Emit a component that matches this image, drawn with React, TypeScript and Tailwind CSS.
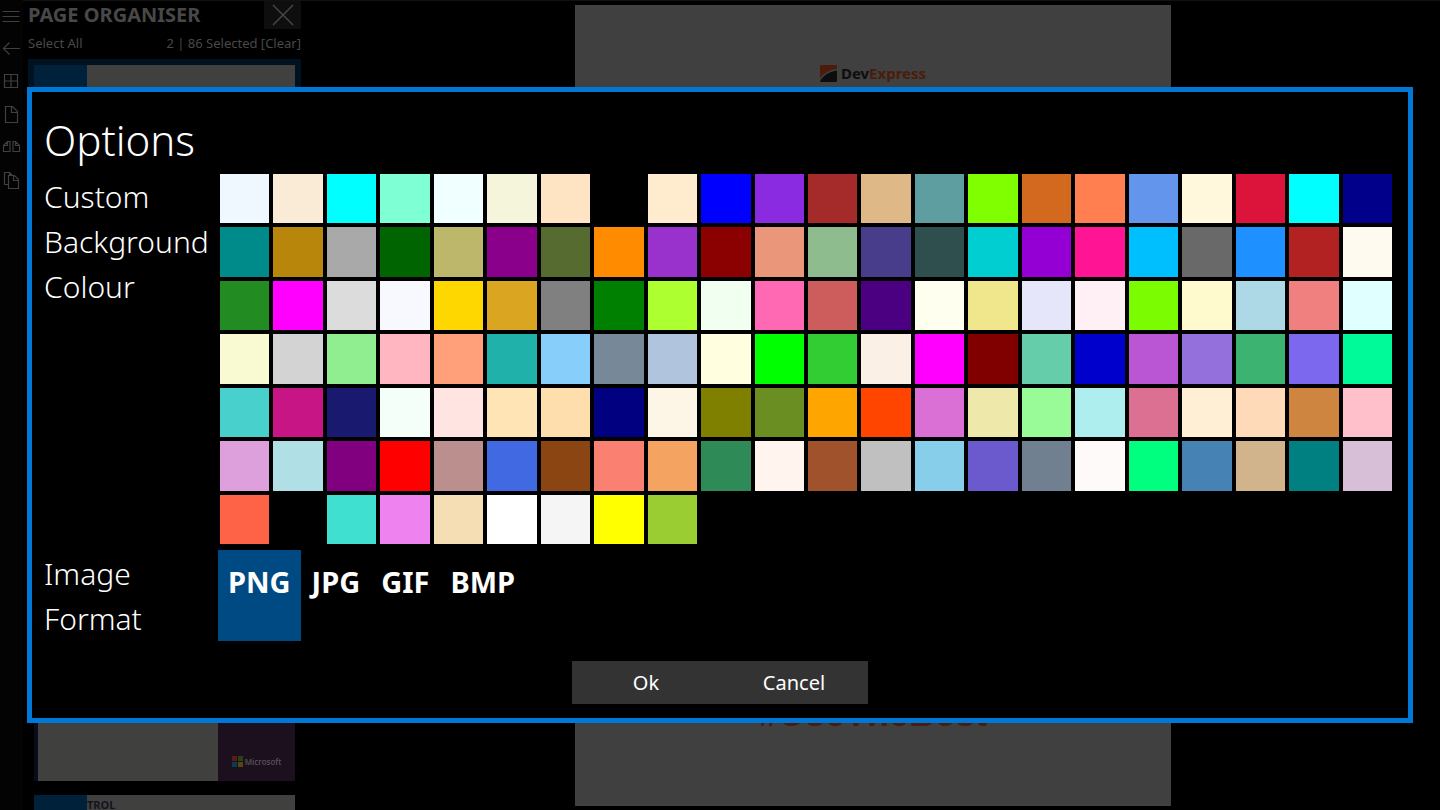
import { useState } from "react";
import type { ReactNode } from "react";

const colours = [
  "AliceBlue", "AntiqueWhite", "Aqua", "Aquamarine", "Azure", "Beige", "Bisque", "Black", "BlanchedAlmond", "Blue", "BlueViolet",
  "Brown", "BurlyWood", "CadetBlue", "Chartreuse", "Chocolate", "Coral", "CornflowerBlue", "Cornsilk", "Crimson", "Cyan", "DarkBlue",
  "DarkCyan", "DarkGoldenrod", "DarkGray", "DarkGreen", "DarkKhaki", "DarkMagenta", "DarkOliveGreen", "DarkOrange", "DarkOrchid",
  "DarkRed", "DarkSalmon", "DarkSeaGreen", "DarkSlateBlue", "DarkSlateGray", "DarkTurquoise", "DarkViolet", "DeepPink",
  "DeepSkyBlue", "DimGray", "DodgerBlue", "Firebrick", "FloralWhite",
  "ForestGreen", "Fuchsia", "Gainsboro", "GhostWhite", "Gold", "Goldenrod", "Gray", "Green", "GreenYellow", "Honeydew", "HotPink",
  "IndianRed", "Indigo", "Ivory", "Khaki", "Lavender", "LavenderBlush", "LawnGreen", "LemonChiffon", "LightBlue", "LightCoral", "LightCyan",
  "LightGoldenrodYellow", "LightGray", "LightGreen", "LightPink", "LightSalmon", "LightSeaGreen", "LightSkyBlue", "LightSlateGray",
  "LightSteelBlue", "LightYellow", "Lime", "LimeGreen", "Linen", "Magenta", "Maroon", "MediumAquamarine", "MediumBlue",
  "MediumOrchid", "MediumPurple", "MediumSeaGreen", "MediumSlateBlue", "MediumSpringGreen",
  "MediumTurquoise", "MediumVioletRed", "MidnightBlue", "MintCream", "MistyRose", "Moccasin", "NavajoWhite", "Navy", "OldLace",
  "Olive", "OliveDrab", "Orange", "OrangeRed", "Orchid", "PaleGoldenrod", "PaleGreen", "PaleTurquoise", "PaleVioletRed",
  "PapayaWhip", "PeachPuff", "Peru", "Pink",
  "Plum", "PowderBlue", "Purple", "Red", "RosyBrown", "RoyalBlue", "SaddleBrown", "Salmon", "SandyBrown", "SeaGreen", "SeaShell",
  "Sienna", "Silver", "SkyBlue", "SlateBlue", "SlateGray", "Snow", "SpringGreen", "SteelBlue", "Tan", "Teal", "Thistle",
  "Tomato", "Transparent", "Turquoise", "Violet", "Wheat", "White", "WhiteSmoke", "Yellow", "YellowGreen",
];

const formats = ["PNG", "JPG", "GIF", "BMP"];

const tools = [
  { name: "Menu", path: "M2.5 6.500h17M2.500 11.500h17M2.500 16.500h17" },
  { name: "Back", path: "M20 10.500H3.500M9.500 4.500l-6 6 6 6" },
  { name: "Thumbnails", path: "M4.500 3.500h13v13h-13zM11 3.500v13M4.500 10h13" },
  { name: "Single page", path: "M5.500 2.500h7l5 5v11h-12zM11.500 2.500v6h6" },
  { name: "Facing pages", path: "M3.500 8.500l4-4h2.500v10H3.500zM3.500 8.500h4v-4M13 4.500h2.500l4 4v6H13zM15.500 4.500v4h4" },
  { name: "Copy pages", path: "M8.500 14.500h-4v-12h5l3 3M9.500 2.500v3M8.500 5.500h6l4 4v9h-10zM13.500 5.500v5h5" },
];

function ToolBar() {
  return (
    <nav className="-mt-[2px] flex w-[23px] shrink-0 flex-col bg-[#030303] pr-[2px] text-[#404040]">
      {tools.map((tool) => (
        <button key={tool.name} aria-label={tool.name} className="flex h-[33px] items-center justify-center">
          <svg width="22" height="22" viewBox="0 0 22 22" fill="none" stroke="currentColor" strokeWidth="1.2" className="shrink-0">
            <path d={tool.path} />
          </svg>
        </button>
      ))}
    </nav>
  );
}

function Thumbnail({ children }: { children?: ReactNode }) {
  return <div className="mx-[6px] flex h-[132px] shrink-0 bg-[#40403f]">{children}</div>;
}

function PageOrganiser() {
  return (
    <aside className="ml-[5px] flex w-[273px] shrink-0 flex-col text-[#484848]">
      <div className="flex h-[28px] shrink-0 items-center justify-between">
        <h2 className="whitespace-nowrap text-xl font-bold">PAGE ORGANISER</h2>
        <button aria-label="Close" className="flex h-full w-[37px] items-center justify-center bg-[#0e0e0e]">
          <svg width="22" height="22" viewBox="0 0 22 22" stroke="currentColor" strokeWidth="1.4">
            <path d="M1 1l20 20M21 1L1 21" />
          </svg>
        </button>
      </div>
      <div className="flex h-[30px] shrink-0 items-center justify-between text-[13px]">
        <button>Select All</button>
        <button>2 | 86 Selected [Clear]</button>
      </div>
      <div className="flex flex-col gap-[14px]">
        <div className="-mb-[6px] bg-[#00121f] py-[6px]">
          <Thumbnail>
            <div className="w-[53px] bg-[#00213a]" />
          </Thumbnail>
        </div>
        <Thumbnail />
        <Thumbnail />
        <Thumbnail />
        <Thumbnail>
          <div className="w-1 bg-[#090d1b]" />
          <div className="flex-1" />
          <div className="flex w-[77px] items-end justify-center gap-[2px] bg-[#1c0f1e] pb-[14px] text-[#5a525a]">
            <svg width="11" height="11" viewBox="0 0 11 11">
              <path d="M0 0h5v5H0z" fill="#54200f" />
              <path d="M6 0h5v5H6z" fill="#2b4211" />
              <path d="M0 6h5v5H0z" fill="#0a3c50" />
              <path d="M6 6h5v5H6z" fill="#5a4411" />
            </svg>
            <span className="font-['Open_Sans'] text-[8px] leading-[11px] font-semibold">Microsoft</span>
          </div>
        </Thumbnail>
        <Thumbnail>
          <div className="w-[53px] bg-[#00213a]" />
          <span className="pt-1 text-[11px] leading-[11px] font-bold text-[#14141f]">TROL</span>
        </Thumbnail>
      </div>
    </aside>
  );
}

function PageViewer() {
  return (
    <main className="flex flex-1 justify-center py-1 pl-[5px]">
      <article className="flex w-[596px] flex-col items-center justify-between bg-[#404040] pt-[58px] pb-[70px]">
        <div className="flex items-center gap-1">
          <svg width="17" height="17" viewBox="0 0 17 17">
            <path d="M1.500 0H17v4C10 4.500 4 8 0 13.500V1.500A1.500 1.500 0 0 1 1.500 0z" fill="#4b1c0b" />
            <path d="M17 5.500V15.500a1.500 1.500 0 0 1-1.500 1.500H1.500C0 17 0 16 .6 15.200 4 10 9.500 6.500 17 5.500z" fill="#0d0d0d" />
          </svg>
          <span className="text-[15px] leading-5 font-bold text-[#0d0d0d]">
            Dev<span className="text-[#4b1c0b]">Express</span>
          </span>
        </div>
        <p className="font-['Liberation_Sans'] text-4xl leading-[44px] font-bold text-[#4b1c0b]">#UseTheBest</p>
      </article>
    </main>
  );
}

function OptionsDialog() {
  const [colour, setColour] = useState("");
  const [format, setFormat] = useState("PNG");

  return (
    <div className="absolute inset-0 flex items-center px-[27px]">
      <section
        role="dialog"
        aria-labelledby="options-title"
        className="w-full border-[5px] border-[#0078d7] bg-black px-3 pt-[18px] pb-[14px] text-white"
      >
        <h1 id="options-title" className="mb-1 text-[42px] leading-[60px] font-light">
          Options
        </h1>
        <div className="mr-1 grid grid-cols-[176px_1fr] gap-y-[6px] text-[30px] leading-[45px] font-light">
          <div id="colour-label">Custom Background Colour</div>
          <div role="group" aria-labelledby="colour-label" className="grid grid-cols-22 gap-1">
            {colours.map((name) => (
              <button
                key={name}
                aria-label={name}
                aria-pressed={colour === name}
                onClick={() => setColour(name)}
                className="aspect-square"
                style={{ backgroundColor: name }}
              />
            ))}
          </div>
          <div id="format-label" className="w-[120px] pt-[1px]">
            Image Format
          </div>
          <div role="group" aria-labelledby="format-label" className="-ml-[2px] flex gap-[1px]">
            {formats.map((name) => (
              <button
                key={name}
                aria-pressed={format === name}
                onClick={() => setFormat(name)}
                className={`flex px-[10px] pt-[9px] text-[29px] font-bold ${format === name ? "bg-[#004a83]" : ""}`}
              >
                {name}
              </button>
            ))}
          </div>
        </div>
        <div className="mt-5 flex justify-center text-xl">
          <button className="h-[43px] w-[148px] bg-[#333333]">Ok</button>
          <button className="h-[43px] w-[148px] bg-[#333333]">Cancel</button>
        </div>
      </section>
    </div>
  );
}

export default function App() {
  return (
    <div className="relative h-screen overflow-hidden bg-black font-['Noto_Sans',sans-serif]">
      <div className="flex h-full border-t border-[#111111]">
        <ToolBar />
        <PageOrganiser />
        <PageViewer />
      </div>
      <OptionsDialog />
    </div>
  );
}
